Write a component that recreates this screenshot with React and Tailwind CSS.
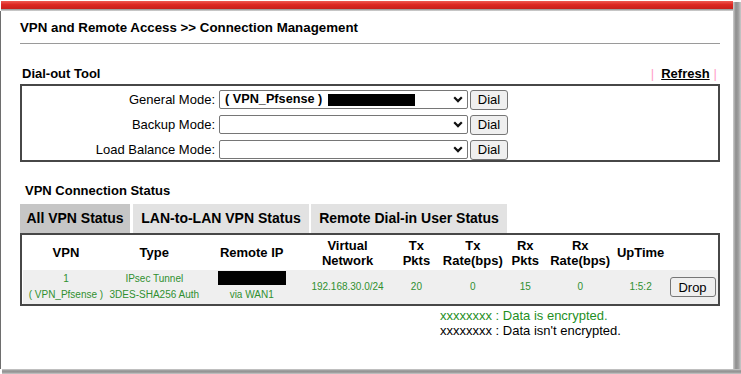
import { ChevronDown } from 'lucide-react'

const cols = [
  { key: 'vpn', w: 'w-[86px]', head: ['VPN'] },
  { key: 'type', w: 'w-[91px]', head: ['Type'] },
  { key: 'ip', w: 'w-[104px]', head: ['Remote IP'] },
  { key: 'net', w: 'w-[88px]', head: ['Virtual', 'Network'] },
  { key: 'txp', w: 'w-[50px]', head: ['Tx', 'Pkts'] },
  { key: 'txr', w: 'w-[63px]', head: ['Tx', 'Rate(bps)'] },
  { key: 'rxp', w: 'w-[42px]', head: ['Rx', 'Pkts'] },
  { key: 'rxr', w: 'w-[68px]', head: ['Rx', 'Rate(bps)'] },
  { key: 'up', w: 'w-[53px]', head: ['UpTime'] },
  { key: 'drop', w: 'w-[51px]', head: [] },
]

function Chevron() {
  return (
    <svg width="10" height="7" viewBox="0 0 10 7" className="shrink-0">
      <path d="M1.2 1.3 L5 5.1 L8.8 1.3" fill="none" stroke="#111" strokeWidth="2.2" />
    </svg>
  )
}

function ModeRow({ label, children }) {
  return (
    <div className="flex items-center h-[25px]">
      <div className="w-[194px] text-right text-[13px] text-black pr-[1px]">{label}</div>
      <div className="ml-[3px] w-[249px] h-[19px] border border-[#767676] rounded-[2px] bg-white flex items-center pl-[5px] pr-[4px]">
        <div className="flex-1 flex items-center">{children}</div>
        <Chevron />
      </div>
      <button className="ml-[2px] w-[38px] h-[20px] bg-[#efefef] border border-[#767676] rounded-[3px] text-[13px] leading-none text-black">
        Dial
      </button>
    </div>
  )
}

export default function App() {
  const tabs = [
    { label: 'All VPN Status', w: 'w-[110px]', bg: 'bg-[#c6c6c6]' },
    { label: 'LAN-to-LAN VPN Status', w: 'w-[176px]', bg: 'bg-[#e2e2e2]' },
    { label: 'Remote Dial-in User Status', w: 'w-[196px]', bg: 'bg-[#e2e2e2]' },
  ]

  return (
    <div className="w-[741px] h-[374px] bg-white flex flex-col overflow-hidden font-['Liberation_Sans',Arial,sans-serif]">
      <div className="flex flex-1 min-h-0">
        <div className="w-[733px] flex flex-col">
          {/* red header strip */}
          <div className="h-[8px] mt-[1px] ml-[1px] bg-[linear-gradient(#ee5a52,#dd2822_45%,#c81f1a)]" />
          <div className="h-[2px] ml-[1px] bg-[linear-gradient(#8e8e8e,#d8d8d8)]" />

          <div className="flex-1 border-l border-[#6e6e6e] pl-[19px] pt-[9px]">
            <div className="text-[13.3px] leading-[15px] font-bold text-black">
              VPN and Remote Access &gt;&gt; Connection Management
            </div>
            <div className="mt-[8px] w-[700px] h-px bg-[#9a9a9a]" />

            {/* Dial-out tool */}
            <div className="mt-[22px] w-[700px] flex items-end justify-between leading-[15px] text-[13px]">
              <span className="font-bold ml-[2px]">Dial-out Tool</span>
              <span className="flex items-center mr-[3px]">
                <span className="text-[#ff9ec6]">|</span>
                <span className="ml-[7px] font-bold underline">Refresh</span>
                <span className="ml-[4px] text-[#ff9ec6]">|</span>
              </span>
            </div>
            <div className="mt-[3px] w-[700px] h-[78px] border-2 border-[#474747] py-[1px]">
              <ModeRow label="General Mode:">
                <span className="text-[12.7px] font-bold text-black">( VPN_Pfsense )</span>
                <span className="ml-[6px] w-[87px] h-[12px] bg-black" />
              </ModeRow>
              <ModeRow label="Backup Mode:" />
              <ModeRow label="Load Balance Mode:" />
            </div>

            {/* VPN connection status */}
            <div className="mt-[21px] ml-[5px] text-[13px] leading-[15px] font-bold">VPN Connection Status</div>
            <div className="mt-[6px] flex">
              {tabs.map((t, i) => (
                <div
                  key={t.label}
                  className={`${t.w} ${t.bg} h-[29px] flex items-center justify-center text-[14px] font-bold ${i === 1 ? 'ml-[3px]' : i === 2 ? 'ml-[2px]' : ''}`}
                >
                  {t.label}
                </div>
              ))}
            </div>
            <div className="w-[700px] border-2 border-[#474747] pl-[1px]">
              <div className="flex h-[35px] items-center bg-white">
                {cols.map((c) => (
                  <div key={c.key} className={`${c.w} text-center text-[13px] leading-[15px] font-bold`}>
                    {c.head.map((h) => (
                      <div key={h}>{h}</div>
                    ))}
                  </div>
                ))}
              </div>
              <div className="flex h-[34px] items-center bg-[#efefef] text-[10px] leading-[16px] text-[#2f8f2f]">
                <div className="w-[86px] text-center">
                  <div>1</div>
                  <div>( VPN_Pfsense )</div>
                </div>
                <div className="w-[91px] text-center">
                  <div>IPsec Tunnel</div>
                  <div>3DES-SHA256 Auth</div>
                </div>
                <div className="w-[104px] flex flex-col items-center">
                  <div className="w-[68px] h-[14px] bg-black" />
                  <div className="mt-[2px]">via WAN1</div>
                </div>
                <div className="w-[88px] text-center">192.168.30.0/24</div>
                <div className="w-[50px] text-center">20</div>
                <div className="w-[63px] text-center">0</div>
                <div className="w-[42px] text-center">15</div>
                <div className="w-[68px] text-center">0</div>
                <div className="w-[53px] text-center">1:5:2</div>
                <div className="w-[51px] flex justify-center">
                  <button className="w-[46px] h-[20px] bg-[#efefef] border border-[#767676] rounded-[3px] text-[13px] leading-none text-black">
                    Drop
                  </button>
                </div>
              </div>
            </div>

            <div className="mt-[2px] ml-[420px] text-[13px] leading-[15px]">
              <div className="text-[#1f8f1f]">xxxxxxxx : Data is encrypted.</div>
              <div className="text-black">xxxxxxxx : Data isn't encrypted.</div>
            </div>
          </div>
        </div>
        {/* right drop shadow */}
        <div className="w-[8px] flex flex-col">
          <div className="h-[2px]" />
          <div className="flex-1 bg-[linear-gradient(to_right,#cfcfcf,#8f8f8f_35%,#9c9c9c_65%,#c9c9c9)]" />
        </div>
      </div>
      {/* bottom drop shadow */}
      <div className="h-[5px] ml-[2px] bg-[linear-gradient(#cfcfcf,#8f8f8f_40%,#a0a0a0_70%,#cacaca)]" />
    </div>
  )
}
